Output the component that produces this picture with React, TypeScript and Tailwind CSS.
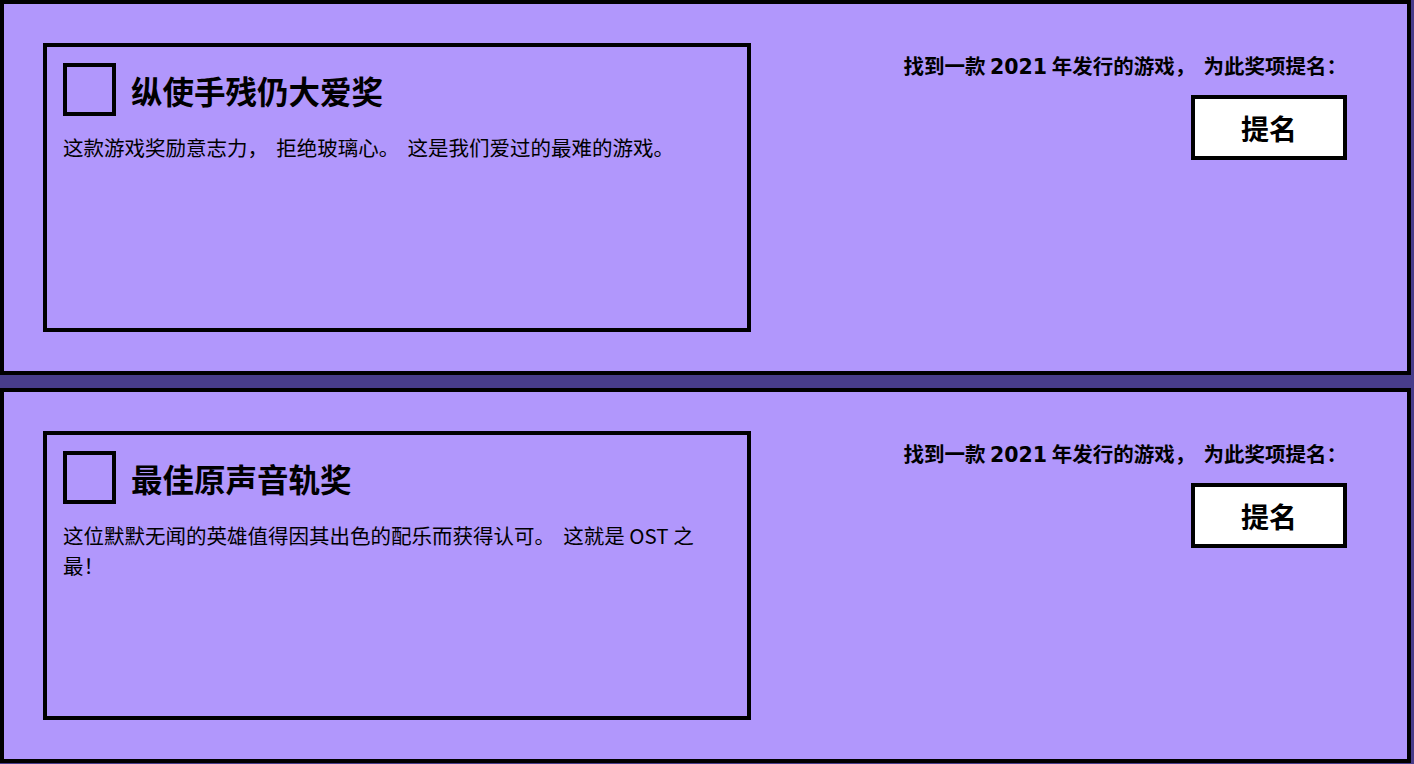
import type { ReactNode } from 'react'

const awards = [
  {
    id: 'hardcore',
    title: '纵使手残仍大爱奖',
    description: '这款游戏奖励意志力，拒绝玻璃心。这是我们爱过的最难的游戏。',
  },
  {
    id: 'ost',
    title: '最佳原声音轨奖',
    description: '这位默默无闻的英雄值得因其出色的配乐而获得认可。这就是 OST 之最！',
  },
]

const cjk = { fontFamily: '"Noto Sans CJK SC", "DejaVu Sans", sans-serif' }
const latin = { fontFamily: '"DejaVu Sans", "Noto Sans CJK SC", sans-serif' }

function widePunct(text: string): ReactNode[] {
  return text.split(/([，。])/).map((part, i) =>
    /^[，。]$/.test(part) ? (
      <span key={i} className="tracking-[0.4em]">
        {part}
      </span>
    ) : (
      part
    ),
  )
}

function AwardSection({ title, description }: { title: string; description: string }) {
  return (
    <section className="flex w-[1411px] justify-between border-4 border-black bg-[#b197fc] py-[39px] pl-[39px] pr-[60px]">
      <div className="h-[289px] w-[708px] border-4 border-black px-4 pt-4">
        <div className="flex items-center">
          <div className="h-[53px] w-[53px] shrink-0 border-4 border-black" />
          <h2 className="ml-[15px] text-[31.5px] font-bold leading-[40px] text-black">{title}</h2>
        </div>
        <p className="mt-4 text-[20.5px] leading-[30px] text-black">{widePunct(description)}</p>
      </div>
      <div className="flex flex-col items-end pt-[8px]">
        <p className="text-[20.5px] font-bold leading-[28px] text-black">
          找到一款 <span style={latin}>2021</span> 年发行的游戏{widePunct('，')}为此奖项提名：
        </p>
        <button className="mt-[14px] h-[65px] w-[156px] border-4 border-black bg-white text-[28px] font-bold leading-none text-black">
          提名
        </button>
      </div>
    </section>
  )
}

export default function App() {
  return (
    <div lang="zh-CN" className="flex min-h-screen flex-col gap-[13px] bg-[#483d8b]" style={cjk}>
      {awards.map((a) => (
        <AwardSection key={a.id} title={a.title} description={a.description} />
      ))}
    </div>
  )
}
